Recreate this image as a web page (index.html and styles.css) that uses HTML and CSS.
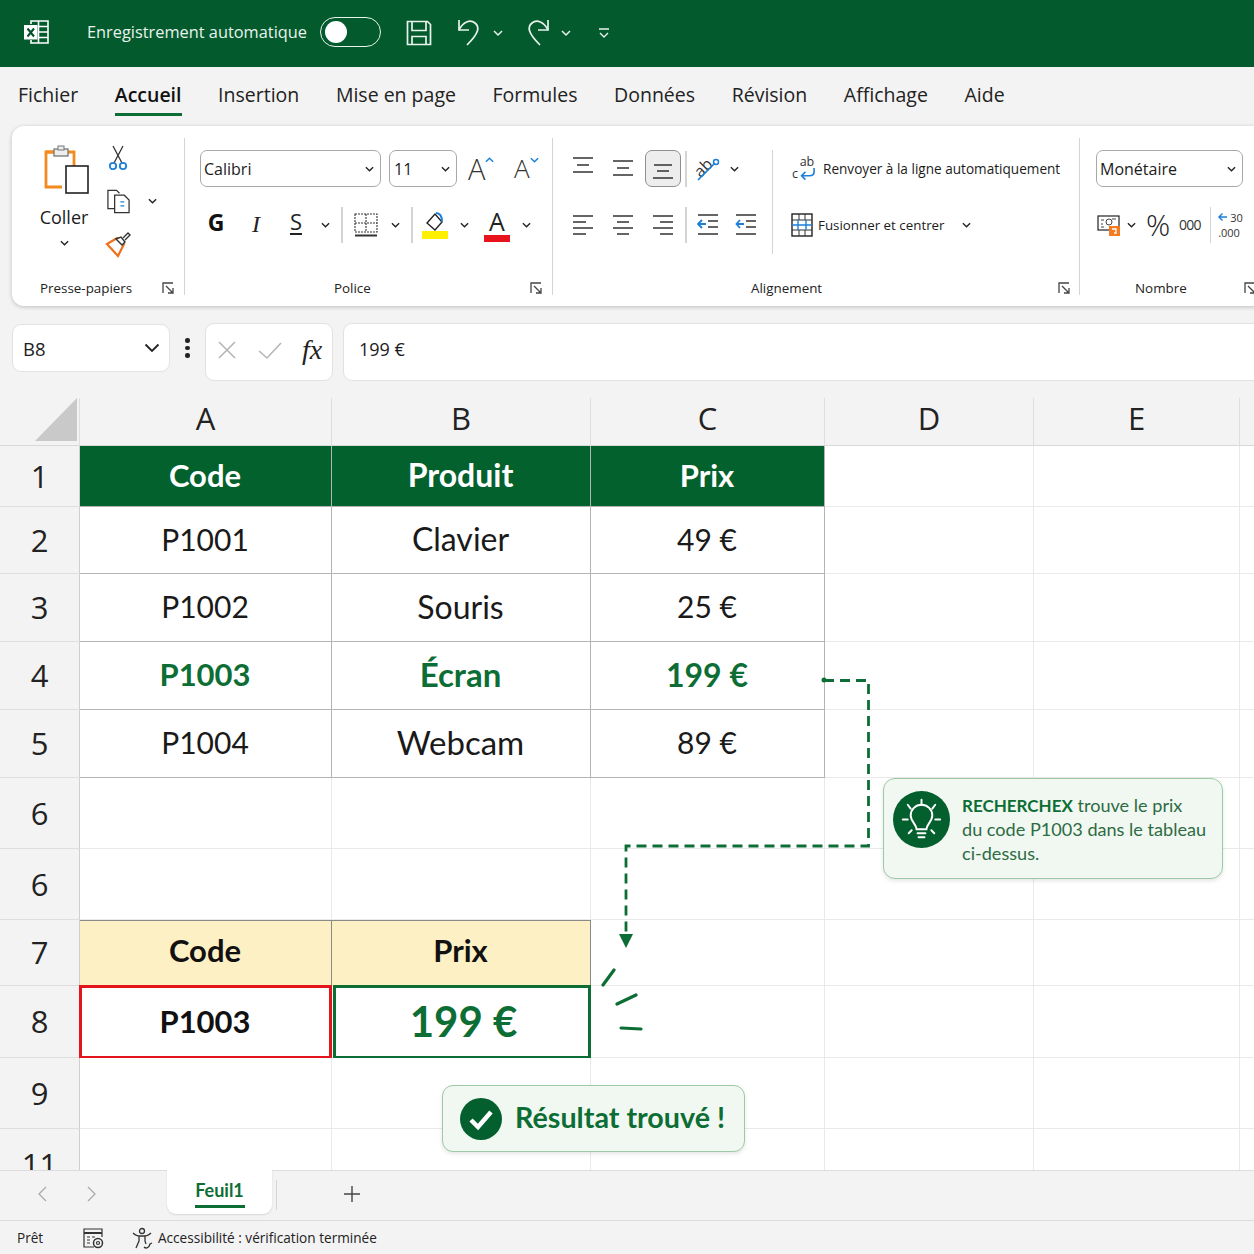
FILE: index.html
```html
<!DOCTYPE html>
<html lang="fr">
<head>
<meta charset="utf-8">
<title>Excel RECHERCHEX</title>
<link rel="stylesheet" href="styles.css">
</head>
<body>
<div class="app">
  <header class="titlebar">
    <svg class="i-xl" viewBox="0 0 26 26" fill="none" stroke="#fff" stroke-width="1.600"><path d="M8 5V2h17v22H8v-3"/><path d="M15.500 2v22M15.500 7.500H25M15.500 13H25M15.500 18.500H25"/><rect x="1" y="6" width="13.500" height="14.500" fill="#fff" stroke="none"/><path d="M4.500 9.500l6.500 8M11 9.500l-6.500 8" stroke="#024f28" stroke-width="2"/></svg>
    <span class="auto-label">Enregistrement automatique</span>
    <span class="toggle"><span class="knob"></span></span>
    <svg class="i-save" viewBox="0 0 26 26" fill="none" stroke="#e9f2ec" stroke-width="1.700"><path d="M1.500 1.500h20l3 3v20h-23z"/><path d="M6 1.500v9h14v-9M6 24.500v-8h14v8"/></svg>
    <svg class="i-undo" viewBox="0 0 24 30" fill="none" stroke="#e9f2ec" stroke-width="1.700"><path d="M2 3v10h10"/><path d="M2 13C6 5 13 2 18 6c5 4 4 10-8 22"/></svg>
    <svg class="i-ch1" viewBox="0 0 10 6" fill="none" stroke="#e9f2ec" stroke-width="1.500"><path d="M1 1l4 4 4-4"/></svg>
    <svg class="i-redo" viewBox="0 0 24 30" fill="none" stroke="#e9f2ec" stroke-width="1.700"><path d="M22 3v10H12"/><path d="M22 13C18 5 11 2 6 6c-5 4-4 10 8 22"/></svg>
    <svg class="i-ch2" viewBox="0 0 10 6" fill="none" stroke="#e9f2ec" stroke-width="1.500"><path d="M1 1l4 4 4-4"/></svg>
    <svg class="i-qat" viewBox="0 0 12 12" fill="none" stroke="#e9f2ec" stroke-width="1.400"><path d="M1 2h10M2 6l4 4 4-4"/></svg>
  </header>

  <nav class="tabs">
    <span>Fichier</span><span class="tab-on">Accueil</span><span>Insertion</span><span>Mise en page</span><span>Formules</span><span>Données</span><span>Révision</span><span>Affichage</span><span>Aide</span>
  </nav>

  <section class="ribbon">
    <div class="group g-clip">
      <div class="clip-top">
        <div class="paste">
          <svg class="i-paste" viewBox="0 0 46 48" fill="none"><path d="M18 7H2v35h16" stroke="#f28a1e" stroke-width="2.800"/><path d="M2 7h28v14" stroke="#f28a1e" stroke-width="2.800"/><rect x="10" y="4" width="14" height="7" fill="#eee" stroke="#777" stroke-width="1.300"/><rect x="14" y="1" width="6" height="4" fill="#eee" stroke="#777"/><rect x="22" y="21" width="22" height="27" fill="#fff" stroke="#222" stroke-width="1.600"/></svg>
          <span class="paste-t">Coller</span>
          <svg class="chev" viewBox="0 0 10 6"><path d="M1 1l4 4 4-4"/></svg>
        </div>
        <div class="clip-tools">
          <svg class="i-sc" viewBox="0 0 18 26" fill="none"><path d="M4 1l9 17M14 1L5 18" stroke="#333" stroke-width="1.300"/><circle cx="4" cy="21" r="3.200" stroke="#1e7fd6" stroke-width="1.800"/><circle cx="14" cy="21" r="3.200" stroke="#1e7fd6" stroke-width="1.800"/></svg>
          <div class="row-copy">
            <svg class="i-cp" viewBox="0 0 26 26" fill="none" stroke="#333" stroke-width="1.300"><path d="M9 21H2V2h9l3 3"/><path d="M9 7h10l5 5v13H9z" fill="#fff"/><path d="M15 14h4M15 18h4" stroke="#1e7fd6"/></svg>
            <svg class="chev ch-copy" viewBox="0 0 10 6"><path d="M1 1l4 4 4-4"/></svg>
          </div>
          <svg class="i-br" viewBox="0 0 26 26" fill="none"><path d="M2 13l11 12 6-12-7-6z" stroke="#f0701a" stroke-width="2.200" fill="#fff"/><path d="M11 8l5-2 4 5-3 3z" fill="#fff" stroke="#333" stroke-width="1.400"/><path d="M18 7l5-5 2 2-5 5" fill="#fff" stroke="#333" stroke-width="1.400"/></svg>
        </div>
      </div>
      <div class="g-label pl-clip"><span>Presse-papiers</span><svg class="launch" viewBox="0 0 12 12"><path d="M1 11V1h10M4 4l7 7M11 6v5H6"/></svg></div>
    </div>

    <div class="group g-font">
      <div class="trow tr-font">
        <div class="sel s-font"><span>Calibri</span><svg class="chev" viewBox="0 0 10 6"><path d="M1 1l4 4 4-4"/></svg></div>
        <div class="sel s-size"><span>11</span><svg class="chev" viewBox="0 0 10 6"><path d="M1 1l4 4 4-4"/></svg></div>
        <span class="grow-a g1">A<svg class="caret" viewBox="0 0 10 6"><path d="M1 5l4-4 4 4"/></svg></span>
        <span class="grow-a g2">A<svg class="caret" viewBox="0 0 10 6"><path d="M1 1l4 4 4-4"/></svg></span>
      </div>
      <div class="trow tr-font2">
        <span class="tool w40 t-g">G</span>
        <span class="tool w40 t-i">I</span>
        <span class="tool w40 t-s">S</span>
        <span class="tool w18"><svg class="chev" viewBox="0 0 10 6"><path d="M1 1l4 4 4-4"/></svg></span>
        <span class="tool w16"><span class="vsep"></span></span>
        <span class="tool w32"><svg class="i24" viewBox="0 0 24 24" fill="none" stroke="#333" stroke-width="1.100"><path d="M1 1h22v18H1z" stroke-dasharray="2 1"/><path d="M12 1v18M1 10h22" stroke-dasharray="2 1"/><path d="M1 22.500h22" stroke-width="2"/></svg></span>
        <span class="tool w26"><svg class="chev" viewBox="0 0 10 6"><path d="M1 1l4 4 4-4"/></svg></span>
        <span class="tool w8"><span class="vsep"></span></span>
        <span class="tool w38 t-fill"><svg class="i-fill" viewBox="0 0 26 30" fill="none"><path d="M5 13l8-9 7 8-7 8z" stroke="#222" stroke-width="1.400"/><path d="M14 3c5 0 6 4 6 9" stroke="#1e7fd6" stroke-width="2"/><rect x="0" y="21" width="26" height="8" fill="#ffef00"/></svg></span>
        <span class="tool w20"><svg class="chev" viewBox="0 0 10 6"><path d="M1 1l4 4 4-4"/></svg></span>
        <span class="tool w46 t-col"><span class="col-a">A</span><span class="col-bar"></span></span>
        <span class="tool w12"><svg class="chev" viewBox="0 0 10 6"><path d="M1 1l4 4 4-4"/></svg></span>
      </div>
      <div class="g-label pl-font"><span>Police</span><svg class="launch" viewBox="0 0 12 12"><path d="M1 11V1h10M4 4l7 7M11 6v5H6"/></svg></div>
    </div>

    <div class="group g-align">
      <div class="al-body">
        <div class="al-left">
          <div class="trow">
            <span class="tool w40"><svg class="i24" viewBox="0 0 24 24" stroke="#333" stroke-width="1.500"><path d="M2 1h20M6 8h12M2 15h20"/></svg></span>
            <span class="tool w40"><svg class="i24" viewBox="0 0 24 24" stroke="#333" stroke-width="1.500"><path d="M2 4h20M6 11h12M2 18h20"/></svg></span>
            <span class="tool w40 t-on"><svg class="i24" viewBox="0 0 24 24" stroke="#333" stroke-width="1.500"><path d="M3 8h18M6 14h12M2 21h20"/></svg></span>
            <span class="tool w6"><span class="vsep"></span></span>
            <span class="tool w38"><svg class="i-or" viewBox="0 0 26 26" fill="none"><text class="or-t" x="0" y="17" transform="rotate(-45 9 13)">ab</text><path d="M3 24L20 7" stroke="#1e7fd6" stroke-width="1.700"/><circle cx="21" cy="6" r="2.500" stroke="#1e7fd6" stroke-width="1.500"/></svg></span>
            <span class="tool w14"><svg class="chev" viewBox="0 0 10 6"><path d="M1 1l4 4 4-4"/></svg></span>
          </div>
          <div class="trow tr-gap">
            <span class="tool w40"><svg class="i24" viewBox="0 0 24 24" stroke="#333" stroke-width="1.500"><path d="M2 3h20M2 9h13M2 15h20M2 21h13"/></svg></span>
            <span class="tool w40"><svg class="i24" viewBox="0 0 24 24" stroke="#333" stroke-width="1.500"><path d="M2 3h20M6 9h12M2 15h20M6 21h12"/></svg></span>
            <span class="tool w40"><svg class="i24" viewBox="0 0 24 24" stroke="#333" stroke-width="1.500"><path d="M2 3h20M9 9h13M2 15h20M9 21h13"/></svg></span>
            <span class="tool w6"><span class="vsep"></span></span>
            <span class="tool w38"><svg class="i24" viewBox="0 0 24 24" fill="none" stroke-width="1.500"><path d="M2 2h20M12 8h10M12 14h10M2 21h20" stroke="#333"/><path d="M10 11H2M6 7l-4 4 4 4" stroke="#1e7fd6" stroke-width="1.800"/></svg></span>
            <span class="tool w38"><svg class="i24" viewBox="0 0 24 24" fill="none" stroke-width="1.500"><path d="M2 2h20M12 8h10M12 14h10M2 21h20" stroke="#333"/><path d="M2 11h8M6 7l-3.500 4L6 15" stroke="#1e7fd6" stroke-width="1.800"/></svg></span>
          </div>
        </div>
        <div class="al-right">
          <div class="wrap-row">
            <svg class="i-wr" viewBox="0 0 26 26" fill="none"><text class="wr-t" x="9" y="10">ab</text><text class="wr-t" x="1" y="22">c</text><path d="M24 12v4c0 3-2 4-5 4H11M15 16l-4 4 4 4" stroke="#1e7fd6" stroke-width="1.700"/></svg>
            <span class="t-wrap">Renvoyer à la ligne automatiquement</span>
          </div>
          <div class="merge-row">
            <svg class="i-mg" viewBox="0 0 22 24" fill="none"><rect x="1" y="1" width="20" height="22" stroke="#222" stroke-width="1.400"/><path d="M1 7h20M1 17h20M8 1v6M14 1v6M8 17v6M14 17v6" stroke="#333"/><path d="M1 12h20M7 7v10M15 7v10" stroke="#1e7fd6" stroke-width="1.400"/></svg>
            <span class="t-merge">Fusionner et centrer</span>
            <svg class="chev ch-merge" viewBox="0 0 10 6"><path d="M1 1l4 4 4-4"/></svg>
          </div>
        </div>
      </div>
      <div class="g-label pl-align"><span>Alignement</span><svg class="launch" viewBox="0 0 12 12"><path d="M1 11V1h10M4 4l7 7M11 6v5H6"/></svg></div>
    </div>

    <div class="group g-num">
      <div class="sel s-num"><span>Monétaire</span><svg class="chev" viewBox="0 0 10 6"><path d="M1 1l4 4 4-4"/></svg></div>
      <div class="trow tr-num">
        <svg class="i-cur" viewBox="0 0 24 24" fill="none"><rect x="1" y="3" width="21" height="14" stroke="#222" stroke-width="1.200"/><path d="M4 7h3M4 11h2M4 14h3M15 6h4" stroke="#444" stroke-width="1.200"/><circle cx="12" cy="9" r="3" stroke="#444"/><rect x="12" y="13" width="11" height="10" fill="#f47b20"/><path d="M15 16h4v4h-2" stroke="#fff" stroke-width="1.300"/></svg>
        <svg class="chev ch-cur" viewBox="0 0 10 6"><path d="M1 1l4 4 4-4"/></svg>
        <span class="t-pct">%</span>
        <span class="t-000">000</span>
        <span class="vsep sep-num"></span>
        <span class="dec"><span class="dec-a"><svg class="i-larr" viewBox="0 0 10 10" fill="none" stroke="#1e7fd6" stroke-width="1.500"><path d="M10 5H1M5 1L1 5l4 4"/></svg><span class="dec-t">30</span></span><span class="dec-t">.000</span></span>
      </div>
      <div class="g-label pl-num"><span>Nombre</span><svg class="launch" viewBox="0 0 12 12"><path d="M1 11V1h10M4 4l7 7M11 6v5H6"/></svg></div>
    </div>
  </section>

  <section class="fbar">
    <div class="namebox"><span class="nb-t">B8</span><svg class="chev-b" viewBox="0 0 16 10" fill="none" stroke="#222" stroke-width="1.800"><path d="M1.500 1.500L8 8l6.500-6.500"/></svg></div>
    <div class="dots"><i></i><i></i><i></i></div>
    <div class="fx-box">
      <svg class="i-x" viewBox="0 0 20 20" stroke="#b5b5b5" stroke-width="1.600"><path d="M2 2l16 16M18 2L2 18"/></svg>
      <svg class="i-ok" viewBox="0 0 24 18" fill="none" stroke="#b5b5b5" stroke-width="1.600"><path d="M1 9l8 7L23 1"/></svg>
      <span class="fx">fx</span>
    </div>
    <div class="finput">199 €</div>
  </section>

  <main class="sheet">
    <div class="grid">
      <div class="ch corner"><svg class="i-cor" viewBox="0 0 42 43"><path d="M42 0v43H0z" fill="#c9c9c9"/></svg></div><div class="ch">A</div><div class="ch">B</div><div class="ch">C</div><div class="ch">D</div><div class="ch">E</div><div class="ch"></div>

      <div class="rh">1</div><div class="c hd f31">Code</div><div class="c hd f32">Produit</div><div class="c hd f31">Prix</div><div class="c"></div><div class="c"></div><div class="c"></div>
      <div class="rh">2</div><div class="c t">P1001</div><div class="c t f32">Clavier</div><div class="c t">49 €</div><div class="c"></div><div class="c"></div><div class="c"></div>
      <div class="rh">3</div><div class="c t">P1002</div><div class="c t f32">Souris</div><div class="c t">25 €</div><div class="c"></div><div class="c"></div><div class="c"></div>
      <div class="rh">4</div><div class="c t hit f31">P1003</div><div class="c t hit f33">Écran</div><div class="c t hit f32">199 €</div><div class="c"></div><div class="c"></div><div class="c"></div>
      <div class="rh">5</div><div class="c t">P1004</div><div class="c t f33">Webcam</div><div class="c t">89 €</div><div class="c"></div><div class="c"></div><div class="c"></div>
      <div class="rh">6</div><div class="c"></div><div class="c"></div><div class="c"></div><div class="c"></div><div class="c"></div><div class="c"></div>
      <div class="rh">6</div><div class="c"></div><div class="c"></div><div class="c"></div><div class="c"></div><div class="c"></div><div class="c"></div>
      <div class="rh">7</div><div class="c yl f31">Code</div><div class="c yl f31">Prix</div><div class="c"></div><div class="c"></div><div class="c"></div><div class="c"></div>
      <div class="rh">8</div><div class="c red f31">P1003</div><div class="c grn">199 €</div><div class="c"></div><div class="c"></div><div class="c"></div><div class="c"></div>
      <div class="rh">9</div><div class="c"></div><div class="c"></div><div class="c"></div><div class="c"></div><div class="c"></div><div class="c"></div>
      <div class="rh">11</div><div class="c"></div><div class="c"></div><div class="c"></div><div class="c"></div><div class="c"></div><div class="c"></div>
    </div>

    <svg class="overlay" viewBox="0 0 1254 772" fill="none" stroke="#0d6e35">
      <circle cx="824" cy="282" r="2.500" fill="#0d6e35" stroke="none"/>
      <path d="M824 282.500h44.500V448H626v90" stroke-width="2.800" stroke-dasharray="10 6"/>
      <path d="M619 536h14l-7 14z" fill="#0d6e35" stroke="none"/>
      <path d="M603 587l11-15M617 606l19-9M621 630l20 1" stroke-width="3.200" stroke-linecap="round"/>
    </svg>

    <aside class="tip">
      <svg class="i-bulb" viewBox="0 0 58 58"><circle cx="29" cy="29" r="29" fill="#045f2f"/><g fill="none" stroke="#fff" stroke-width="2" stroke-linecap="round"><path d="M29 9v5M15 14l3 4M43 14l-3 4M10 29h5M43 29h5M16 43l3-3M42 43l-3-3"/><path d="M24 39c0-5-6-8-6-14a11 11 0 0 1 22 0c0 6-6 9-6 14z"/><path d="M25 43h8M26 47h6"/></g></svg>
      <p class="tip-t"><b>RECHERCHEX</b> trouve le prix<br>du code P1003 dans le tableau<br>ci-dessus.</p>
    </aside>

    <aside class="found">
      <svg class="i-check" viewBox="0 0 42 42"><circle cx="21" cy="21" r="21" fill="#045f2f"/><path d="M11 22l7 7 13-15" fill="none" stroke="#fff" stroke-width="4.500"/></svg>
      <span class="found-t">Résultat trouvé !</span>
    </aside>
  </main>

  <div class="sheetbar">
    <svg class="i-nav n1" viewBox="0 0 10 16" fill="none" stroke="#aaa" stroke-width="1.300"><path d="M9 1L2 8l7 7"/></svg>
    <svg class="i-nav n2" viewBox="0 0 10 16" fill="none" stroke="#aaa" stroke-width="1.300"><path d="M1 1l7 7-7 7"/></svg>
    <div class="sheettab"><span class="st-t">Feuil1</span></div>
    <span class="st-sep"></span>
    <svg class="i-plus" viewBox="0 0 16 16" stroke="#444" stroke-width="1.400"><path d="M8 0v16M0 8h16"/></svg>
  </div>

  <footer class="status">
    <span class="st-ready">Prêt</span>
    <svg class="i-cam" viewBox="0 0 22 22" fill="none" stroke="#333" stroke-width="1.200"><path d="M12 20H2V2h18v8"/><path d="M2 6h18" stroke-width="2"/><path d="M5 10h3M5 13h3M5 16h3M10 10h3"/><circle cx="16" cy="16" r="4.500" stroke-width="1.500"/><circle cx="16" cy="16" r="1.500"/></svg>
    <svg class="i-acc" viewBox="0 0 22 22" fill="none" stroke="#333" stroke-width="1.300"><circle cx="11" cy="4" r="2.500"/><path d="M2 6c3 3 5 3 9 3s6 0 9-3M8 9v5l-3 7M14 9v5l1 3"/><path d="M13 20c2 2 5 1 6-3l2-1" stroke="#333"/></svg>
    <span class="st-acc">Accessibilité : vérification terminée</span>
  </footer>
</div>
</body>
</html>
```

FILE: styles.css
```css
* { box-sizing: border-box; }
html, body { margin: 0; padding: 0; }
body { width: 1254px; height: 1254px; overflow: hidden; background: #f3f3f3; font-family: "Open Sans", "Noto Sans", sans-serif; color: #1c1c1c; }
.app { width: 1254px; height: 1254px; display: flex; flex-direction: column; overflow: hidden; }
svg { overflow: visible; }

/* title bar */
.titlebar { height: 67px; flex: none; background: #025a2d; display: flex; align-items: center; padding-left: 23px; color: #e9f2ec; }
.i-xl { width: 26px; height: 26px; margin-right: 38px; margin-top: -3px; }
.auto-label { width: 233px; font-size: 16.350px; white-space: nowrap; margin-top: -4px; }
.toggle { width: 61px; height: 30px; border: 1.500px solid #e9f2ec; border-radius: 15px; display: flex; align-items: center; padding-left: 4px; margin-top: -3px; }
.knob { width: 22px; height: 22px; border-radius: 50%; background: #fff; }
.i-save { width: 26px; height: 26px; margin-left: 25px; margin-top: -2px; }
.i-undo { width: 24px; height: 30px; margin-left: 25px; margin-top: -4px; }
.i-ch1 { width: 10px; height: 6px; margin-left: 12px; margin-top: -2px; }
.i-redo { width: 24px; height: 30px; margin-left: 23px; margin-top: -4px; }
.i-ch2 { width: 10px; height: 6px; margin-left: 11px; margin-top: -2px; }
.i-qat { width: 12px; height: 12px; margin-left: 27px; margin-top: -2px; }

/* tabs */
.tabs { height: 59px; flex: none; display: flex; gap: 36.600px; padding: 14px 0 0 18px; font-size: 19.500px; line-height: 27px; white-space: nowrap; color: #222; }
.tab-on { font-weight: 600; height: 35px; border-bottom: 3px solid #0d6e35; color: #111; }

/* ribbon */
.ribbon { height: 180px; flex: none; margin-left: 12px; width: 1300px; background: #fff; border-radius: 12px 0 0 12px; box-shadow: 0 1px 4px rgba(0,0,0,.22); display: flex; padding: 12px 0 11px; }
.group { height: 157px; display: flex; flex-direction: column; border-right: 1.500px solid #d4d4d4; flex: none; }
.g-clip { width: 173px; }
.g-font { width: 368px; padding-top: 12px; }
.g-align { width: 527px; padding-top: 12px; }
.g-num { width: 220px; border-right: 0; padding: 12px 0 0 16px; }

.g-label { margin-top: auto; height: 14px; display: flex; align-items: center; font-size: 13.400px; color: #222; white-space: nowrap; }
.launch { width: 12px; height: 12px; margin-left: auto; fill: none; stroke: #444; stroke-width: 1.300; }
.pl-clip { padding: 0 10px 0 28px; }
.pl-font { padding: 0 10px 0 149px; }
.pl-align { padding: 0 9px 0 198px; }
.pl-num { margin-left: -16px; padding: 0 0 0 55px; width: 176px; }

.chev { width: 9px; height: 6px; fill: none; stroke: #222; stroke-width: 1.500; flex: none; }
.vsep { display: block; width: 1.500px; height: 36px; background: #d4d4d4; }
.trow { display: flex; align-items: center; height: 37px; }
.tool { height: 37px; display: flex; align-items: center; justify-content: center; flex: none; }
.w6 { width: 6px; } .w8 { width: 8px; } .w12 { width: 12px; } .w14 { width: 14px; } .w16 { width: 16px; } .w18 { width: 18px; } .w20 { width: 20px; } .w26 { width: 26px; } .w32 { width: 32px; } .w38 { width: 38px; } .w40 { width: 40px; } .w46 { width: 46px; }
.i24 { width: 24px; height: 24px; }

/* clipboard */
.clip-top { display: flex; padding: 7px 0 0 20px; }
.paste { width: 64px; display: flex; flex-direction: column; align-items: center; }
.i-paste { width: 46px; height: 48px; margin-left: 6px; }
.paste-t { font-size: 18px; line-height: 22px; margin-top: 13px; }
.paste .chev { margin-top: 12px; }
.clip-tools { width: 68px; display: flex; flex-direction: column; align-items: flex-start; padding-top: 0; }
.i-sc { width: 18px; height: 26px; margin-left: 13px; }
.row-copy { display: flex; align-items: center; margin-top: 17px; margin-left: 10px; }
.i-cp { width: 25px; height: 26px; }
.ch-copy { margin-left: 17px; }
.i-br { width: 26px; height: 26px; margin: 17px 0 0 9px; }

/* font */
.tr-font { padding-left: 15px; gap: 8px; }
.sel { height: 37px; border: 1.300px solid #a8a8a8; border-radius: 7px; display: flex; align-items: center; justify-content: space-between; font-size: 16px; padding: 0 6px 0 3px; background: #fff; }
.s-font { width: 181px; }
.s-size { width: 68px; padding-left: 4px; }
.grow-a { line-height: 37px; display: flex; color: #333; font-weight: 300; }
.g1 { margin-left: 3px; font-size: 29px; width: 38px; }
.g2 { font-size: 26px; width: 30px; margin-left: 0; }
.caret { width: 9px; height: 6px; margin-top: 7px; fill: none; stroke: #1e7fd6; stroke-width: 1.600; flex: none; }
.tr-font2 { padding-left: 11px; margin-top: 19px; }
.t-g { font-weight: 700; font-size: 23px; color: #111; padding-bottom: 5px; }
.t-i { font-family: "Liberation Serif", serif; font-style: italic; font-size: 24px; color: #222; }
.t-s { font-size: 22px; text-decoration: underline; color: #222; text-underline-offset: 3px; padding-bottom: 7px; }
.i-fill { width: 26px; height: 30px; }
.t-col { flex-direction: column; }
.col-a { font-size: 25px; line-height: 27px; color: #222; }
.col-bar { width: 26px; height: 7px; background: #e8141c; }

/* alignment */
.al-body { display: flex; }
.al-left { width: 220px; padding-left: 10px; border-right: 1.500px solid #d4d4d4; height: 104px; }
.tr-gap { margin-top: 19px; }
.t-on { height: 37px; width: 36px; margin: 0 2px; background: #ededed; border: 1.300px solid #8f8f8f; border-radius: 7px; }
.i-or { width: 26px; height: 26px; }
.or-t { font-size: 16px; fill: #333; font-family: "Open Sans", sans-serif; }
.al-right { padding-left: 18px; }
.wrap-row { display: flex; align-items: center; height: 37px; }
.i-wr { width: 25px; height: 26px; }
.wr-t { font-size: 13px; fill: #333; font-family: "Open Sans", sans-serif; }
.t-wrap { margin-left: 7px; font-size: 13.600px; white-space: nowrap; }
.merge-row { display: flex; align-items: center; height: 37px; margin-top: 19px; }
.i-mg { width: 22px; height: 24px; }
.t-merge { margin-left: 5px; font-size: 13.350px; white-space: nowrap; width: 144px; }
.ch-merge { margin-left: 0; }

/* number */
.s-num { width: 147px; }
.tr-num { margin-top: 19px; margin-left: -15px; padding-left: 15px; }
.i-cur { width: 24px; height: 24px; margin-left: 1px; }
.ch-cur { margin-left: 6px; }
.t-pct { font-size: 30px; margin-left: 10px; color: #222; width: 26px; font-weight: 300; }
.t-000 { font-size: 14px; margin-left: 7px; color: #333; letter-spacing: -.8px; }
.sep-num { margin-left: 9px; }
.dec { display: flex; flex-direction: column; margin-left: 7px; font-size: 11px; line-height: 15px; color: #333; }
.dec-a { display: flex; align-items: center; gap: 3px; }
.i-larr { width: 9px; height: 10px; }

/* formula bar */
.fbar { height: 58px; flex: none; margin: 17px 0; display: flex; align-items: flex-start; padding-left: 12px; width: 1300px; }
.namebox { width: 158px; height: 48px; margin-top: 1px; background: #fff; border: 1px solid #e2e2e2; border-radius: 9px; display: flex; align-items: center; justify-content: space-between; padding: 0 9px 0 10px; font-size: 18.500px; }
.chev-b { width: 16px; height: 10px; }
.dots { width: 35px; height: 48px; margin-top: 1px; display: flex; flex-direction: column; align-items: center; justify-content: center; gap: 3px; }
.dots i { width: 4.500px; height: 4.500px; background: #222; border-radius: 50%; }
.fx-box { width: 128px; height: 58px; background: #fff; border: 1px solid #e2e2e2; border-radius: 9px; display: flex; align-items: flex-start; padding: 16px 0 0 11px; }
.i-x { width: 20px; height: 20px; }
.i-ok { width: 24px; height: 18px; margin: 2px 0 0 21px; }
.fx { font-family: "Liberation Serif", serif; font-style: italic; font-size: 28px; line-height: 20px; margin-left: 20px; color: #222; }
.finput { margin-left: 10px; flex: 1; height: 58px; background: #fff; border: 1px solid #e2e2e2; border-radius: 9px; font-size: 18px; padding: 12px 0 0 15px; line-height: 26px; }

/* sheet */
.sheet { position: relative; flex: 1; min-height: 0; overflow: hidden; }
.grid { display: grid; grid-template-columns: 80px 252px 259px 234px 209px 206px 15px; grid-template-rows: 48px 61px 67px 68px 68px 68px 71px 71px 66px 72px 71px 71px; font-family: Lato, "Open Sans", sans-serif; font-size: 30px; }
.f31 { font-size: 31px; } .f32 { font-size: 32px; } .f33 { font-size: 33px; }
.ch { background: #f3f3f3; border-right: 1px solid #dedede; border-bottom: 1px solid #d8d8d8; display: flex; align-items: center; justify-content: center; font-family: "Open Sans", sans-serif; font-size: 31px; padding-bottom: 7px; color: #222; }
.corner { justify-content: flex-start; align-items: flex-start; padding: 0 0 0 35px; }
.i-cor { width: 42px; height: 43px; }
.rh { background: #f3f3f3; border-right: 1px solid #cfcfcf; border-bottom: 1px solid #dedede; display: flex; align-items: center; justify-content: center; padding-bottom: 1px; font-family: "Open Sans", sans-serif; font-size: 31px; color: #222; }
.c { background: #fff; border-right: 1px solid #e9e9e9; border-bottom: 1px solid #e9e9e9; display: flex; align-items: center; justify-content: center; color: #1a1a1a; white-space: nowrap; padding: 0 1px 3px 0; }
.t { border-right-color: #b4b4b4; border-bottom-color: #b4b4b4; }
.hd { background: #03612e; color: #fff; font-weight: 700; border-right-color: #b4b4b4; border-bottom-color: #b4b4b4; }
.hit { color: #0d6e35; font-weight: 700; }
.yl { background: #fdf0c4; color: #111; font-weight: 700; border: 1px solid #8a8a8a; border-left: 0; border-bottom: 0; padding-bottom: 7px; }
.red { font-weight: 700; border: 3px solid #e3141c; color: #111; margin: -1px 0 -1px -1px; }
.grn { font-weight: 700; font-size: 42px; color: #0d6e35; border: 3px solid #0d6e35; padding-left: 4px; margin: -1px 0 -1px 1px; }

.overlay { position: absolute; left: 0; top: 0; width: 1254px; height: 772px; pointer-events: none; }
.tip { position: absolute; left: 883px; top: 380px; width: 340px; height: 101px; background: #f1f8f1; border: 1.300px solid #9ccaa6; border-radius: 12px; box-shadow: 0 2px 4px rgba(0,0,0,.1); display: flex; align-items: flex-start; padding: 12px 0 0 9px; }
.i-bulb { width: 57px; height: 57px; flex: none; }
.tip-t { margin: 2px 0 0 12px; font-family: Lato, sans-serif; font-size: 18.100px; line-height: 24px; color: #2d6b44; white-space: nowrap; }
.tip-t b { color: #0d6e35; font-size: 17px; line-height: 20px; }
.found { position: absolute; left: 442px; top: 687px; width: 303px; height: 67px; background: #f1f8f1; border: 1.300px solid #9ccaa6; border-radius: 11px; box-shadow: 0 2px 4px rgba(0,0,0,.1); display: flex; align-items: center; padding-left: 17px; }
.i-check { width: 42px; height: 42px; flex: none; }
.found-t { margin: -3px 0 0 13px; font-family: Lato, sans-serif; font-weight: 700; font-size: 28.700px; color: #0d6e35; white-space: nowrap; }

/* sheet bar */
.sheetbar { height: 51px; flex: none; display: flex; align-items: flex-start; padding-left: 37px; border-top: 1px solid #dcdcdc; border-bottom: 1px solid #dcdcdc; background: #f3f3f3; }
.i-nav { width: 10px; height: 16px; margin-top: 15px; }
.n2 { margin-left: 40px; }
.sheettab { width: 105px; height: 44px; margin: -1px 0 0 70px; background: #fff; border-radius: 0 0 9px 9px; display: flex; justify-content: center; box-shadow: 0 1px 2px rgba(0,0,0,.12); }
.st-t { height: 38px; width: 50px; text-align: center; border-bottom: 3px solid #0d6e35; font-family: Lato, sans-serif; font-weight: 700; font-size: 18px; line-height: 40px; color: #0d6e35; }
.st-sep { width: 1px; height: 30px; margin: 9px 0 0 4px; background: #d6d6d6; }
.i-plus { width: 16px; height: 16px; margin: 15px 0 0 67px; }

/* status */
.status { height: 33px; flex: none; display: flex; align-items: center; padding-left: 17px; font-size: 13.600px; color: #222; }
.st-ready { width: 65px; }
.i-cam { width: 22px; height: 22px; }
.i-acc { width: 22px; height: 22px; margin-left: 27px; }
.st-acc { margin-left: 5px; white-space: nowrap; }
```
